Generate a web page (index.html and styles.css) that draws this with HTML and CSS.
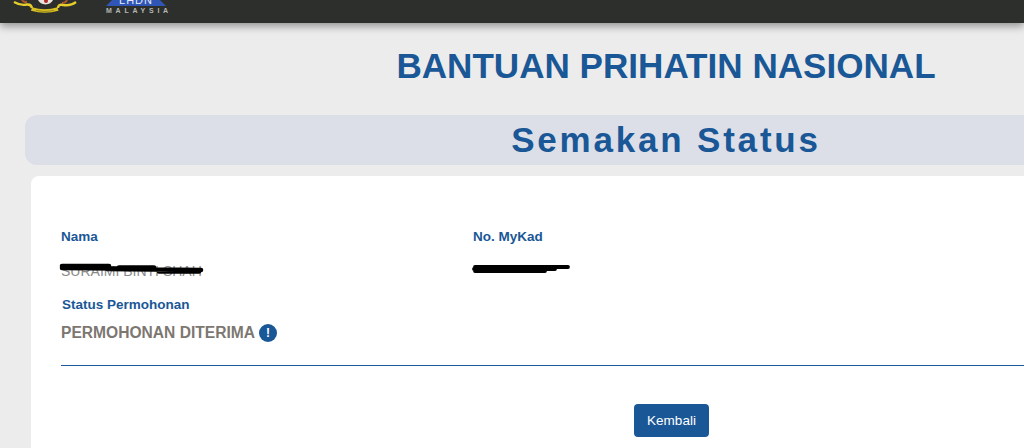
FILE: index.html
```html
<!DOCTYPE html>
<html lang="ms">
<head>
  <meta charset="UTF-8">
  <title>Bantuan Prihatin Nasional</title>
  <meta name="viewport" content="width=device-width, initial-scale=1">
  <link rel="stylesheet" href="styles.css">
</head>
<body>
  <header class="topbar">
    <svg class="crest" width="64" height="14" viewBox="0 0 64 14">
      <path d="M9 0 Q10 2 14 2 M54 0 Q53 3 49 3" fill="none" stroke="#a8552e" stroke-width="2"/>
      <path d="M25 0 H40 Q38 4 32.5 4.5 Q27 4 25 0 Z" fill="#e8e4dc"/>
      <circle cx="33" cy="1" r="2" fill="#b22b2b"/>
      <path d="M1 2 Q8 6 14 4.5 Q18 4 19 8 M45 8 Q45 4 50 5 Q58 6 63 2" fill="none" stroke="#e6cd2b" stroke-width="2.4"/>
      <path d="M18.5 9 Q32 13 45 9" fill="none" stroke="#d8c020" stroke-width="3.6"/>
      <path d="M23 10.5 Q32 12.5 41 10.5" fill="none" stroke="#8d7f1c" stroke-width="0.8"/>
    </svg>
    <div class="lhdn">
      <div class="lhdn-mark">LHDN</div>
      <div class="lhdn-country">MALAYSIA</div>
    </div>
  </header>

  <main class="page">
    <h1 class="title">BANTUAN PRIHATIN NASIONAL</h1>
    <div class="band">Semakan Status</div>
    <section class="card">
      <div class="fields">
        <div class="field">
          <div class="label">Nama</div>
          <div class="value redacted">
            SURAIMI BINTI SHAH
            <svg class="scribble" width="146" height="14" viewBox="0 0 146 14">
              <path d="M3 3 L50 3 M3 5 L60 5.5 M48 6 L142 7 M60 4.5 L95 4.5 M100 8.5 L140 8.5" fill="none" stroke="#000" stroke-width="4.6" stroke-linecap="round"/>
            </svg>
          </div>
        </div>
        <div class="field">
          <div class="label">No. MyKad</div>
          <div class="value redacted">
            <svg class="scribble" width="100" height="14" viewBox="0 0 100 14">
              <path d="M4 4 L97 4 M3 6 L84 6 M4 8 L74 8" fill="none" stroke="#000" stroke-width="3.8" stroke-linecap="round" stroke-dasharray="6 0.6"/>
            </svg>
          </div>
        </div>
      </div>
      <div class="status">
        <div class="label">Status Permohonan</div>
        <div class="status-value">
          PERMOHONAN DITERIMA
          <span class="info-badge">!</span>
        </div>
      </div>
      <hr class="divider">
      <div class="actions">
        <button class="btn">Kembali</button>
      </div>
    </section>
  </main>
</body>
</html>
```

FILE: styles.css
```css
html, body { height: 100%; }
body {
  margin: 0;
  background: #ececec;
  font-family: "Liberation Sans", Arial, sans-serif;
  overflow: hidden;
}

.topbar {
  height: 23px;
  background: #2c2f2b;
  box-shadow: 0 3px 9px #0006;
  display: flex;
  align-items: flex-end;
  padding-left: 13px;
  gap: 29px;
}
.crest { margin-bottom: 9px; flex: none; }
.lhdn { width: 65px; margin-bottom: 9px; }
.lhdn-mark {
  height: 6px;
  width: 60px;
  background: #2f55b5;
  clip-path: polygon(6px 0, 54px 0, 60px 100%, 0 100%);
  color: #e6ecf8;
  font-size: 11px;
  line-height: 0;
  text-align: center;
  letter-spacing: 1px;
  overflow: hidden;
}
.lhdn-country {
  margin-top: 2px;
  color: #b5b8b6;
  font-size: 7px;
  font-weight: bold;
  line-height: 6px;
  letter-spacing: 3.75px;
  white-space: nowrap;
}

.page {
  width: 1282px;
  margin-left: 25px;
}
.title {
  margin: 0;
  padding-top: 21px;
  height: 92px;
  box-sizing: border-box;
  text-align: center;
  color: #1a5796;
  font-size: 35.1px;
  line-height: 44px;
  font-weight: bold;
}
.band {
  height: 50px;
  background: #dcdfe8;
  border-radius: 12px 0 0 12px;
  text-align: center;
  color: #1a5796;
  font-size: 35px;
  line-height: 50px;
  font-weight: bold;
  letter-spacing: 2.8px;
}

.card {
  margin: 11px 0 0 6px;
  background: #fff;
  border-radius: 8px 0 0 0;
  padding: 54px 0 0 30px;
  height: 300px;
}
.fields { display: flex; }
.field { width: 412px; }
.label {
  color: #1a5796;
  font-size: 13.5px;
  line-height: 14px;
  font-weight: bold;
}
.value {
  margin-top: 19px;
  height: 16px;
  color: #8a8a8a;
  font-size: 14px;
  line-height: 16px;
}
.redacted { position: relative; }
.scribble { position: absolute; left: -2px; top: 0; }

.status { margin: 19px 0 0 1px; }
.label + .status-value { margin-top: 11px; }
.status-value {
  margin-left: -1px;
  display: flex;
  align-items: center;
  gap: 4px;
  color: #7d7771;
  font-size: 15.6px;
  line-height: 20px;
  font-weight: bold;
}
.info-badge {
  width: 18px;
  height: 18px;
  border-radius: 50%;
  background: #1a5796;
  color: #fff;
  font-size: 12px;
  line-height: 18px;
  text-align: center;
}
.divider {
  margin: 22px 0 0;
  border: none;
  border-top: 1px solid #1a5c9c;
}
.actions {
  margin-top: 38px;
  padding-left: 573px;
}
.btn {
  width: 75px;
  height: 33px;
  padding: 0;
  border: none;
  border-radius: 4px;
  background: #1a5796;
  color: #fff;
  font-family: inherit;
  font-size: 13.5px;
}
```
